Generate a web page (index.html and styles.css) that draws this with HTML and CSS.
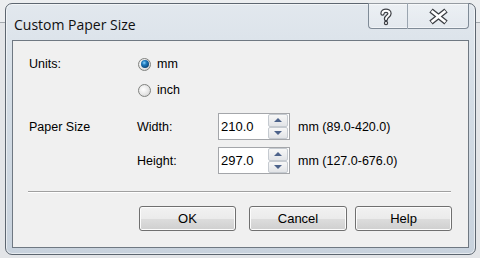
FILE: index.html
```html
<!DOCTYPE html>
<html>
  <head>
    <title>Custom Paper Size</title>
    <link rel="stylesheet" href="styles.css">
  </head>
  <body>
    <div class="window">
      <div class="titlebar">
        <span class="title">Custom Paper Size</span>
        <div class="caption">
          <button class="cap help">
            <svg width="12" height="18" viewBox="0 0 12 18">
              <path d="M2.5 5.5 C2.5 1.8 9.5 1.8 9.5 5.5 C9.5 8.2 6 8.4 6 11" fill="none" stroke="#3c3f44" stroke-width="4.4" stroke-linecap="round"/>
              <circle cx="6" cy="15" r="2.2" fill="#3c3f44"/>
              <path d="M2.5 5.5 C2.5 1.8 9.5 1.8 9.5 5.5 C9.5 8.2 6 8.4 6 11" fill="none" stroke="#fff" stroke-width="2" stroke-linecap="round"/>
              <circle cx="6" cy="15" r="1" fill="#fff"/>
            </svg>
          </button>
          <button class="cap close">
            <svg width="21" height="17" viewBox="0 0 21 17">
              <path d="M3 2.5 L18 14.5 M18 2.5 L3 14.5" stroke="#3c3f44" stroke-width="5.4"/>
              <path d="M3.6 3 L17.4 14 M17.4 3 L3.6 14" stroke="#fff" stroke-width="2.8"/>
            </svg>
          </button>
        </div>
      </div>
      <div class="client">
        <div class="units">
          <span class="label">Units:</span>
          <div class="radios">
            <label class="radio"><span class="dot checked"></span>mm</label>
            <label class="radio"><span class="dot"></span>inch</label>
          </div>
        </div>
        <div class="paper">
          <span class="label">Paper Size</span>
          <span>Width:</span>
          <div class="spin">
            <span class="value">210.0</span>
            <div class="arrows">
              <span class="arrow up"></span>
              <span class="arrow down"></span>
            </div>
          </div>
          <span class="range">mm (89.0-420.0)</span>
          <span></span>
          <span>Height:</span>
          <div class="spin">
            <span class="value">297.0</span>
            <div class="arrows">
              <span class="arrow up"></span>
              <span class="arrow down"></span>
            </div>
          </div>
          <span class="range">mm (127.0-676.0)</span>
        </div>
        <div class="separator"></div>
        <div class="actions">
          <button class="btn ok">OK</button>
          <button class="btn cancel">Cancel</button>
          <button class="btn">Help</button>
        </div>
      </div>
    </div>
  </body>
</html>
```
FILE: styles.css
```css
body {
  margin: 0;
  height: 258px;
  overflow: hidden;
  background: linear-gradient(to bottom, #eceef0 0, #eceef0 22px, #a4a9ae 22px, #a4a9ae 23px, #e3e5e8 23px);
  font-family: "Liberation Sans", Arial, sans-serif;
  font-size: 12.5px;
  color: #000;
}
.window {
  box-sizing: border-box;
  width: 471px;
  height: 252px;
  margin: 3px 0 0 5px;
  border: 1px solid #5d6670;
  border-radius: 7px;
  /* aero frame */
  background: linear-gradient(to bottom, #e2e8ee 0%, #d3dce5 40%, #c8d2dd 100%);
  box-shadow: inset 0 0 0 1px rgba(255, 255, 255, 0.55);
  display: flex;
  flex-direction: column;
}
.titlebar {
  height: 36px;
  display: flex;
  justify-content: space-between;
  align-items: flex-start;
}
.title {
  font-family: "Open Sans", "Noto Sans", sans-serif;
  font-size: 14px;
  line-height: 20px;
  padding: 11px 0 0 8px;
  color: #101010;
}
.caption {
  display: flex;
  margin-right: 6px;
  margin-top: -1px;
}
.cap {
  box-sizing: border-box;
  height: 26px;
  padding: 0;
  border: 1px solid #7f8b97;
  border-top: none;
  background: linear-gradient(to bottom, rgba(255,255,255,0.35), rgba(255,255,255,0.15));
  box-shadow: inset 0 -1px 0 rgba(255, 255, 255, 0.5);
  display: flex;
  align-items: center;
  justify-content: center;
}
.cap.help {
  width: 39px;
  border-right: none;
  border-bottom-left-radius: 4px;
  padding-top: 2px;
}
.cap.close {
  width: 62px;
  border-left: 1px solid #9aa5b0;
  border-bottom-right-radius: 4px;
  padding-top: 1px;
}
.cap.help svg {
  margin-right: 4px;
}
.client {
  box-sizing: border-box;
  height: 208px;
  margin: 0 6px;
  border: 1px solid #6f7882;
  background: #f0f0f0;
  padding: 10px 0 0 16px;
}
.units {
  display: flex;
}
.label {
  width: 108px;
}
.units .label {
  line-height: 26px;
}
.radios {
  display: flex;
  flex-direction: column;
  padding-left: 1px;
}
.radio {
  height: 26px;
  display: flex;
  align-items: center;
  gap: 6px;
}
.dot {
  box-sizing: border-box;
  width: 13px;
  height: 13px;
  border-radius: 50%;
  border: 1px solid #80827f;
  background: radial-gradient(circle at 40% 40%, #ffffff 0%, #e6e6e6 55%, #c4c4c4 100%);
  display: flex;
  align-items: center;
  justify-content: center;
}
.dot.checked::after {
  content: "";
  width: 8px;
  height: 8px;
  border-radius: 50%;
  background: radial-gradient(circle at 40% 35%, #8fd6ff 0%, #1f7cc0 30%, #0a3f70 80%);
}
.paper {
  display: grid;
  grid-template-columns: 108px 81px 72px auto;
  grid-auto-rows: 27px;
  row-gap: 7px;
  margin-top: 10px;
  align-items: center;
}
.spin {
  box-sizing: border-box;
  height: 27px;
  border: 1px solid #a4a6aa;
  background: #fff;
  display: flex;
  align-items: center;
  justify-content: space-between;
}
.value {
  padding-left: 2px;
  font-size: 13px;
}
.arrows {
  width: 20px;
  height: 25px;
  margin-right: 1px;
  display: flex;
  flex-direction: column;
}
.arrow {
  box-sizing: border-box;
  flex: 1;
  border: 1px solid #c5cad0;
  border-radius: 2px;
  background: linear-gradient(to bottom, #f7f7f7, #e2e4e7);
  display: flex;
  align-items: center;
  justify-content: center;
}
.arrow::after {
  content: "";
  border-left: 4px solid transparent;
  border-right: 4px solid transparent;
}
.arrow.up::after {
  border-bottom: 4px solid #4c628a;
}
.arrow.down::after {
  border-top: 4px solid #4c628a;
}
.range {
  padding-left: 8px;
}
.separator {
  margin: 17px 17px 0 -1px;
  height: 1px;
  background: #a0a0a0;
  border-bottom: 1px solid #fff;
}
.actions {
  display: flex;
  justify-content: flex-end;
  margin-top: 13px;
  padding-right: 16px;
  gap: 8px;
}
.btn {
  box-sizing: border-box;
  width: 97px;
  height: 25px;
  border: 1px solid #707070;
  border-radius: 3px;
  background: linear-gradient(to bottom, #f2f2f2 0%, #ebebeb 50%, #dddddd 51%, #cfcfcf 100%);
  box-shadow: inset 0 0 0 1px #fcfcfc;
  font-family: "Liberation Sans", Arial, sans-serif;
  font-size: 13px;
  color: #000;
  padding: 0;
}
.btn.ok {
  margin-right: 5px;
}
.btn.cancel {
  width: 98px;
}
```
